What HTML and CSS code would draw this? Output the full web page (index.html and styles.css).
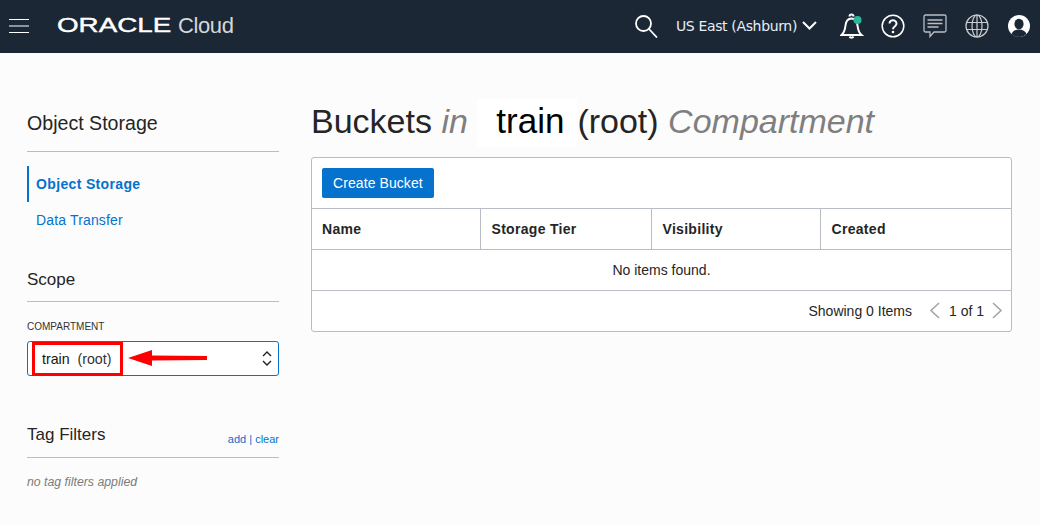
FILE: index.html
```html
<!DOCTYPE html>
<html lang="en">
<head>
    <meta charset="UTF-8">
    <meta name="viewport" content="width=device-width, initial-scale=1.0">
    <title>Buckets - Oracle Cloud</title>
    <link rel="stylesheet" href="styles.css">
</head>
<body>
    <header class="topbar">
        <div class="brand">
            <svg class="burger" width="20" height="14" viewBox="0 0 20 14"><path d="M0 .5h20M0 7h20M0 13.5h20" stroke="#fff" stroke-width="1.2"/></svg>
            <span class="logo-word"><span class="logo-oracle">ORACLE</span></span>
            <span class="logo-cloud">Cloud</span>
        </div>
        <div class="tools">
            <svg class="search" width="24" height="24" viewBox="0 0 24 24" fill="none" stroke="#fff" stroke-width="1.8"><circle cx="9.5" cy="9.5" r="7.5"/><path d="M15 15l8 8.5"/></svg>
            <span class="region">US East (Ashburn)</span>
            <svg class="chev" width="15" height="9" viewBox="0 0 15 9" fill="none" stroke="#fff" stroke-width="2"><path d="M1 1l6.500 6.500L14 1"/></svg>
            <svg class="bell" width="24" height="26" viewBox="0 0 24 26" fill="none" stroke="#fff" stroke-width="2"><path d="M1.500 22c3-2.500 3.500-5 4-9.500C6 8 8 5.500 11.500 5.500s5.500 2.500 6 7c.5 4.500 1 7 4 9.500z"/><path d="M9.500 3.500a2 2 0 0 1 4 0M9.500 23.500a2.200 2 0 0 0 4 0"/><circle cx="17.500" cy="7" r="4" fill="#2bb89a" stroke="none"/></svg>
            <svg class="help" width="24" height="24" viewBox="0 0 24 24" fill="none" stroke="#fff" stroke-width="1.500"><circle cx="12" cy="12" r="10.800"/><path d="M8.500 9.500a3.500 3.300 0 1 1 5.500 2.700c-1.300.9-2 1.500-2 3" stroke-width="2"/><circle cx="12" cy="18" r="1.300" fill="#fff" stroke="none"/></svg>
            <svg class="chat" width="24" height="24" viewBox="0 0 24 24" fill="none" stroke="#b9bdc3" stroke-width="1.300"><path d="M2.500 1h19a1.500 1.500 0 0 1 1.500 1.500v14a1.500 1.500 0 0 1-1.500 1.500H11l-4 4.500V18H2.500A1.500 1.500 0 0 1 1 16.500v-14A1.500 1.500 0 0 1 2.500 1z"/><path d="M4.500 6h15M4.500 9.500h15M4.500 13h11"/></svg>
            <svg class="globe" width="24" height="24" viewBox="0 0 24 24" fill="none" stroke="#c9ccd0" stroke-width="1.200"><circle cx="12" cy="12" r="11"/><ellipse cx="12" cy="12" rx="5" ry="11"/><path d="M12 1v22M1.500 8.500h21M1.500 15.500h21"/></svg>
            <svg class="user" width="24" height="24" viewBox="0 0 24 24"><circle cx="12" cy="12" r="11" fill="#fff"/><ellipse cx="12" cy="10" rx="4.600" ry="5.200" fill="#1c2735"/><path d="M4.500 20c1-3 4-4.500 7.500-4.500s6.500 1.500 7.500 4.500c-2 2-4.700 3-7.500 3s-5.500-1-7.500-3z" fill="#1c2735"/></svg>
        </div>
    </header>

    <div class="page">
        <aside class="sidebar">
            <h2 class="side-title first">Object Storage</h2>
            <nav class="side-nav">
                <a class="nav-item active">Object Storage</a>
                <a class="nav-item">Data Transfer</a>
            </nav>

            <h2 class="side-title scope">Scope</h2>
            <div class="field-label">COMPARTMENT</div>
            <div class="select">
                <span class="select-value">train&nbsp; <span class="select-root">(root)</span></span>
                <svg width="10" height="17" viewBox="0 0 10 17" fill="none" stroke="#222" stroke-width="1.400"><path d="M1 6l4-4 4 4M1 11l4 4 4-4"/></svg>
                <span class="callout-box"></span>
                <svg class="callout-arrow" width="80" height="20" viewBox="0 0 80 20"><path d="M79 8L24 7.500V2L0 10l24 8v-5.500L79 12z" fill="#f00"/></svg>
            </div>

            <div class="tag-head">
                <h2 class="side-title tag">Tag Filters</h2>
                <span class="tag-links"><a>add</a> | <a>clear</a></span>
            </div>
            <p class="no-tags">no tag filters applied</p>
        </aside>

        <main class="content">
            <h1 class="page-title">Buckets <em>in</em> <span class="title-name">train</span><span class="title-root">(root)</span> <em>Compartment</em></h1>
            <div class="panel">
                <div class="toolbar"><button class="btn">Create Bucket</button></div>
                <table class="grid">
                    <thead>
                        <tr><th class="col-name">Name</th><th class="col-tier">Storage Tier</th><th class="col-vis">Visibility</th><th>Created</th></tr>
                    </thead>
                    <tbody>
                        <tr><td colspan="4">No items found.</td></tr>
                    </tbody>
                </table>
                <div class="pager">
                    <span>Showing 0 Items</span>
                    <svg class="pg-prev" width="11" height="17" viewBox="0 0 11 17" fill="none" stroke="#a5a5a5" stroke-width="1.600"><path d="M10 1L2 8.500l8 7.500"/></svg>
                    <span>1 of 1</span>
                    <svg class="pg-next" width="11" height="17" viewBox="0 0 11 17" fill="none" stroke="#a5a5a5" stroke-width="1.600"><path d="M1 1l8 7.500L1 16"/></svg>
                </div>
            </div>
        </main>
    </div>
</body>
</html>
```

FILE: styles.css
```css
* {
    box-sizing: border-box;
}

body {
    margin: 0;
    background-color: #fcfcfc;
    color: #252525;
    font-family: "Liberation Sans", Arial, sans-serif;
    font-size: 14px;
}

.topbar {
    display: flex;
    justify-content: space-between;
    align-items: center;
    height: 53px;
    padding: 0 9px 2px 9px;
    background-color: #1c2735;
}

.brand {
    display: flex;
    align-items: center;
}

.burger {
    margin-right: 28px;
}

.logo-word {
    display: block;
    width: 114px;
    margin-right: 7px;
}

.logo-oracle {
    display: inline-block;
    color: #fff;
    font-size: 20px;
    transform: scaleX(1.39);
    transform-origin: left center;
    -webkit-text-stroke: 0.4px #fff;
}

.logo-cloud {
    color: #d5d7da;
    font-size: 22px;
    letter-spacing: -0.4px;
}

.tools {
    display: flex;
    align-items: center;
}

.region {
    margin: 0 5px 0 18px;
    color: #e6eef6;
    font-family: "DejaVu Sans", sans-serif;
    font-size: 14px;
    letter-spacing: -0.35px;
}

.chev {
    margin-right: 23px;
}

.help {
    margin-left: 17px;
}

.chat,
.globe,
.user {
    margin-left: 18px;
}

.page {
    display: flex;
    padding: 0 28px 0 27px;
}

.sidebar {
    width: 252px;
    margin-right: 32px;
}

.side-title {
    margin: 0;
    font-size: 17px;
    font-weight: normal;
    line-height: 22px;
}

.side-title.first {
    margin-top: 59px;
    padding-bottom: 17px;
    border-bottom: 1px solid #b8bcc4;
    font-size: 19.600px;
}

.side-nav {
    display: flex;
    flex-direction: column;
    margin-top: 14px;
    letter-spacing: 0.15px;
}

.nav-item {
    display: block;
    height: 36px;
    padding-left: 7px;
    border-left: 2px solid transparent;
    color: #0572ce;
    line-height: 36px;
}

.nav-item.active {
    border-left-color: #0572ce;
    font-weight: bold;
    letter-spacing: 0.35px;
}

.side-title.scope {
    margin-top: 31px;
    padding-bottom: 10px;
    border-bottom: 1px solid #b8bcc4;
}

.field-label {
    margin-top: 19px;
    color: #333;
    font-size: 10px;
    line-height: 12px;
}

.select {
    position: relative;
    display: flex;
    justify-content: space-between;
    align-items: center;
    height: 35px;
    margin-top: 8px;
    padding: 0 6px 0 14px;
    border: 1px solid #0572ce;
    border-radius: 3px;
    background-color: #fff;
}

.select-value {
    color: #161513;
    font-size: 14.200px;
}

.select-root {
    color: #333;
}

/* red annotation drawn over the screenshot */
.callout-box {
    position: absolute;
    left: 4px;
    top: 0;
    width: 91px;
    height: 34px;
    border: 3px solid #f00;
}

.callout-arrow {
    position: absolute;
    left: 100px;
    top: 6px;
}

.tag-head {
    display: flex;
    justify-content: space-between;
    align-items: flex-end;
    margin-top: 48px;
    padding-bottom: 11px;
    border-bottom: 1px solid #b8bcc4;
}

.tag-links {
    color: #0572ce;
    font-size: 11px;
    line-height: 14px;
}

.no-tags {
    margin: 17px 0 0;
    color: #7b7b7b;
    font-size: 12.300px;
    font-style: italic;
}

.content {
    flex: 1;
}

.page-title {
    margin: 46px 0 0;
    height: 58px;
    font-size: 34px;
    font-weight: normal;
    line-height: 44px;
    white-space: nowrap;
}

.page-title em {
    color: #7f7f7f;
}

.title-name {
    display: inline-block;
    height: 48px;
    padding: 0 13px 0 19px;
    background-color: #fff;
    color: #000;
    font-size: 35px;
}

.title-root {
    color: #252525;
}

.panel {
    border: 1px solid #b8bcc4;
    border-radius: 3px;
    background-color: #fff;
}

.toolbar {
    height: 51px;
    padding: 10px;
    border-bottom: 1px solid #b8bcc4;
}

.btn {
    height: 30px;
    padding: 0 11px;
    border: none;
    border-radius: 2px;
    background-color: #0572ce;
    color: #fff;
    font-family: inherit;
    font-size: 14px;
    letter-spacing: 0.08px;
}

.grid {
    width: 100%;
    border-collapse: collapse;
    table-layout: fixed;
}

.grid th {
    height: 40px;
    padding: 0 10px 0 11px;
    border-bottom: 1px solid #b8bcc4;
    border-left: 1px solid #b8bcc4;
    text-align: left;
    letter-spacing: 0.3px;
}

.grid th:first-child {
    padding-left: 10px;
    border-left: none;
}

.col-name {
    width: 168px;
}

.col-tier {
    width: 171px;
}

.col-vis {
    width: 169px;
}

.grid td {
    height: 41px;
    padding-right: 1px;
    border-bottom: 1px solid #b8bcc4;
    text-align: center;
}

.pager {
    display: flex;
    justify-content: flex-end;
    align-items: center;
    height: 40px;
    padding-right: 8px;
}

.pg-prev {
    margin: 0 9px 0 17px;
}

.pg-next {
    margin-left: 8px;
}
```
